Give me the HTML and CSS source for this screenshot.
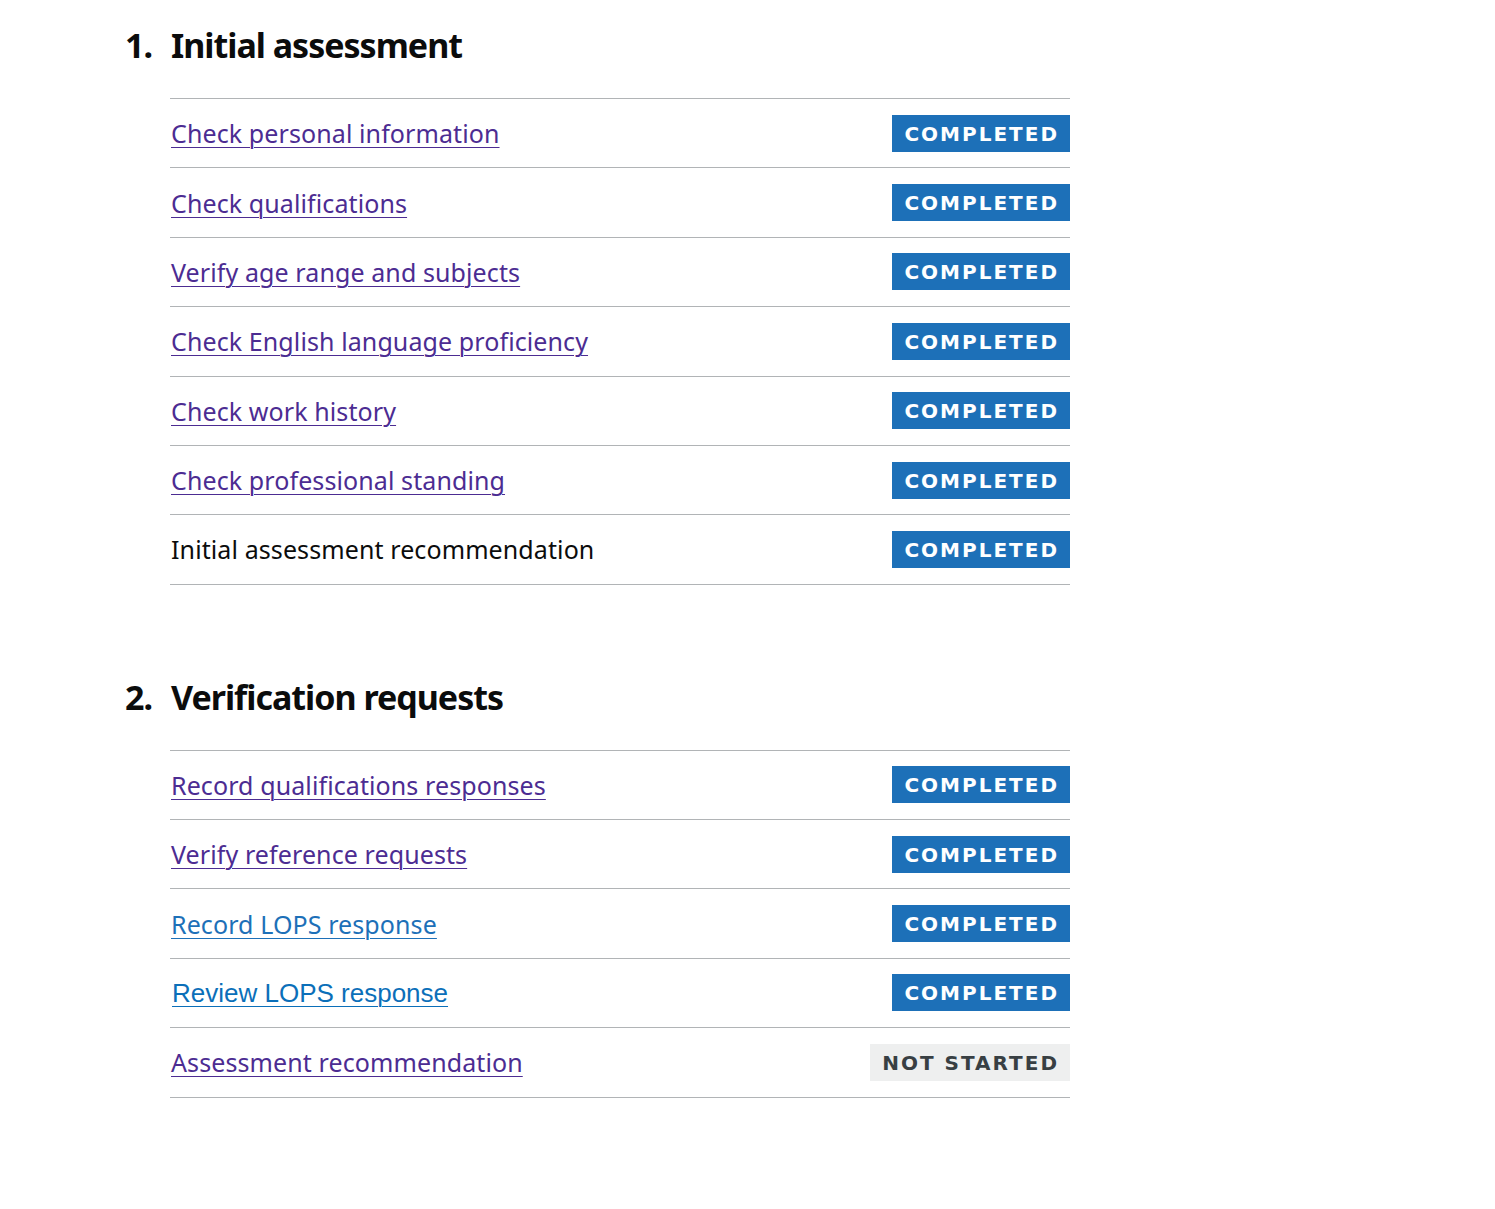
FILE: index.html
```html
<!DOCTYPE html>
<html lang="en">
<head>
<meta charset="utf-8">
<title>Assessment task list</title>
<link rel="stylesheet" href="styles.css">
</head>
<body>
<main class="page">
  <section class="section">
    <h2 class="section-heading"><span class="section-num">1.</span><span>Initial assessment</span></h2>
    <ul class="task-list">
      <li class="task"><a class="task-link" href="#">Check personal information</a><strong class="tag tag-done">Completed</strong></li>
      <li class="task"><a class="task-link" href="#">Check qualifications</a><strong class="tag tag-done">Completed</strong></li>
      <li class="task"><a class="task-link" href="#">Verify age range and subjects</a><strong class="tag tag-done">Completed</strong></li>
      <li class="task"><a class="task-link" href="#">Check English language proficiency</a><strong class="tag tag-done">Completed</strong></li>
      <li class="task"><a class="task-link" href="#">Check work history</a><strong class="tag tag-done">Completed</strong></li>
      <li class="task"><a class="task-link" href="#">Check professional standing</a><strong class="tag tag-done">Completed</strong></li>
      <li class="task"><span class="task-text">Initial assessment recommendation</span><strong class="tag tag-done">Completed</strong></li>
    </ul>
  </section>
  <section class="section">
    <h2 class="section-heading"><span class="section-num">2.</span><span>Verification requests</span></h2>
    <ul class="task-list">
      <li class="task"><a class="task-link" href="#">Record qualifications responses</a><strong class="tag tag-done">Completed</strong></li>
      <li class="task"><a class="task-link" href="#">Verify reference requests</a><strong class="tag tag-done">Completed</strong></li>
      <li class="task"><a class="task-link task-link-blue" href="#">Record LOPS response</a><strong class="tag tag-done">Completed</strong></li>
      <li class="task"><a class="task-link task-link-alt" href="#">Review LOPS response</a><strong class="tag tag-done">Completed</strong></li>
      <li class="task"><a class="task-link" href="#">Assessment recommendation</a><strong class="tag tag-new">Not started</strong></li>
    </ul>
  </section>
</main>
</body>
</html>
```
FILE: styles.css
```css
html, body {
  margin: 0;
  padding: 0;
  background: #ffffff;
}
body {
  font-family: "Noto Sans", "Liberation Sans", Arial, sans-serif;
  color: #0b0c0c;
}
.page {
  padding: 25px 0 0 125px;
  width: 945px;
}
.section {
  margin-bottom: 92px;
}
.section-heading {
  display: flex;
  margin: 0 0 33px 0;
  font-size: 34px;
  line-height: 40px;
  font-weight: 700;
  letter-spacing: -1px;
}
.section-num {
  width: 46px;
  flex: none;
}
.task-list {
  list-style: none;
  margin: 0 0 0 45px;
  padding: 0;
  border-top: 1px solid #b1b4b6;
}
.task {
  display: flex;
  justify-content: space-between;
  align-items: center;
  padding: 15.7px 0;
  border-bottom: 1px solid #b1b4b6;
  font-size: 25px;
  line-height: 30px;
}
.task-link {
  color: #4c2c92;
  text-decoration: underline;
  text-decoration-thickness: 1px;
  text-underline-offset: 4px;
  margin-left: 1px;
  letter-spacing: 0.1px;
}
.task-link-blue {
  color: #1d70b8;
}
.task-link-alt {
  color: #0b6fb9;
  font-family: "Liberation Sans", Arial, sans-serif;
  font-size: 26px;
  letter-spacing: 0;
  margin-left: 2px;
}
.task-text {
  margin-left: 1px;
  letter-spacing: 0.1px;
  color: #0b0c0c;
}
.tag {
  display: inline-block;
  height: 37px;
  box-sizing: border-box;
  padding: 1px 11px 0 12px;
  font-family: "DejaVu Sans", "Noto Sans", sans-serif;
  font-size: 20px;
  line-height: 36px;
  font-weight: 700;
  letter-spacing: 2px;
  text-transform: uppercase;
}
.tag-done {
  background: #1d70b8;
  color: #ffffff;
}
.tag-new {
  background: #eeefef;
  color: #383f43;
}
```
